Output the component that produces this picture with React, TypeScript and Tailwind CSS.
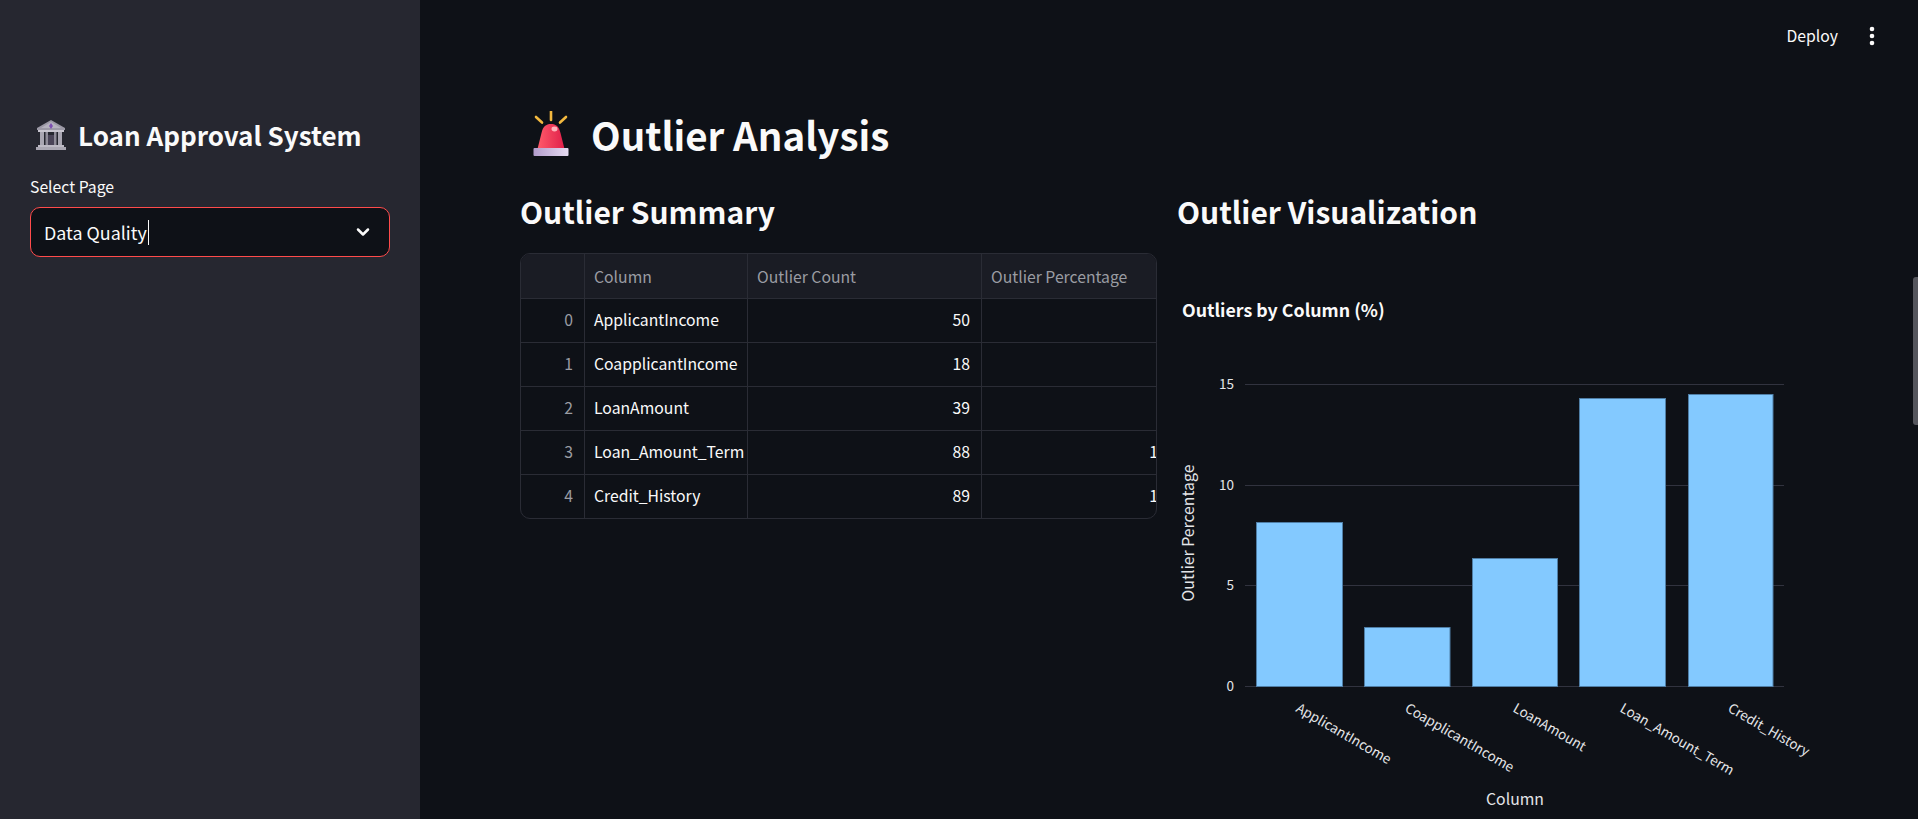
import { ChevronDown } from "lucide-react";

const rows = [
  ["0", "ApplicantIncome", "50", "8.1433"],
  ["1", "CoapplicantIncome", "18", "2.9316"],
  ["2", "LoanAmount", "39", "6.3518"],
  ["3", "Loan_Amount_Term", "88", "14.3322"],
  ["4", "Credit_History", "89", "14.4951"],
];

const bars = [
  { x: 86, w: 87, top: 521, label: "ApplicantIncome", lx: 125 },
  { x: 194, w: 86.5, top: 626, label: "CoapplicantIncome", lx: 234 },
  { x: 302, w: 86, top: 557, label: "LoanAmount", lx: 342 },
  { x: 409, w: 87, top: 397, label: "Loan_Amount_Term", lx: 449 },
  { x: 518, w: 85.5, top: 393, label: "Credit_History", lx: 557 },
];

function BankIcon() {
  return (
    <svg width="32" height="32" viewBox="0 0 32 32" aria-hidden="true">
      <path d="M16 1 L30 9 L30 11 L2 11 L2 9 Z" fill="#9c99a6" />
      <path d="M16 3 L26 9 L6 9 Z" fill="#b5b2be" />
      <path d="M16 4 l2 3 l-2 3 l-2 -3 Z" fill="#7d4fb0" />
      <rect x="3" y="11" width="26" height="2" fill="#c8c5cf" />
      <rect x="5" y="13" width="4" height="13" fill="#a9a6b2" />
      <rect x="10.5" y="13" width="2.5" height="13" fill="#8f8c99" />
      <rect x="19" y="13" width="2.5" height="13" fill="#8f8c99" />
      <rect x="23" y="13" width="4" height="13" fill="#a9a6b2" />
      <rect x="13" y="16" width="6" height="10" fill="#4a4458" />
      <rect x="3" y="26" width="26" height="2" fill="#bdbac5" />
      <rect x="1" y="28" width="30" height="3" fill="#aaa7b3" />
    </svg>
  );
}

function AlarmIcon() {
  return (
    <svg width="38" height="46" viewBox="0 0 38 46" aria-hidden="true">
      <defs>
        <linearGradient id="dome" x1="0" y1="0" x2="1" y2="0">
          <stop offset="0" stopColor="#ff5a6a" />
          <stop offset="1" stopColor="#e0204a" />
        </linearGradient>
        <linearGradient id="base" x1="0" y1="0" x2="1" y2="0">
          <stop offset="0" stopColor="#b29ccb" />
          <stop offset="1" stopColor="#e6dcf2" />
        </linearGradient>
      </defs>
      <path d="M18 0.5 V9" stroke="#f3b93f" strokeWidth="2.6" strokeLinecap="round" />
      <path d="M3 6 L9 11.5" stroke="#f3b93f" strokeWidth="2.6" strokeLinecap="round" />
      <path d="M33 6 L27 11.5" stroke="#f3b93f" strokeWidth="2.6" strokeLinecap="round" />
      <path d="M4.5 38 L8.5 22 C10 15.5 13 13 18 13 C23 13 26 15.5 27.5 22 L31.5 38 Z" fill="url(#dome)" />
      <ellipse cx="21.5" cy="18" rx="3" ry="2.4" fill="#ffb3bc" />
      <rect x="0.5" y="37" width="35" height="8" rx="1" fill="url(#base)" />
    </svg>
  );
}

function Chart() {
  // viewBox origin corresponds to the page point (1170, 290)
  const y = (v: number) => v - 290;
  return (
    <svg width="660" height="529" viewBox="0 0 660 529" className="block font-['Noto_Sans_CJK_SC',sans-serif]">
      <text x="12" y={y(316)} fontSize="17.8" fontWeight="700" fill="#fafafa">Outliers by Column (%)</text>
      {[
        [383, "15"],
        [484, "10"],
        [584, "5"],
        [685, "0"],
      ].map(([g, t]) => (
        <g key={t as string}>
          <line x1="75" x2="614" y1={y(g as number) + 0.5} y2={y(g as number) + 0.5} stroke="#31333f" strokeWidth="1" />
          <text x="64" y={y(g as number) + 5} textAnchor="end" fontSize="13.5" fill="#e4e5e8">{t}</text>
        </g>
      ))}
      {bars.map((b) => (
        <g key={b.label}>
          <rect x={b.x + 0.5} y={y(b.top) + 0.5} width={b.w - 1} height={685 - b.top} fill="#83c9ff" stroke="#4f7ea6" strokeWidth="1" />
          <text
            x={b.lx}
            y={y(710)}
            fontSize="13.5"
            fill="#e4e5e8"
            transform={`rotate(30 ${b.lx} ${y(710)})`}
          >
            {b.label}
          </text>
        </g>
      ))}
      <text x="345" y={y(804)} textAnchor="middle" fontSize="15.8" fill="#e4e5e8">Column</text>
      <text
        x="24"
        y={y(532)}
        textAnchor="middle"
        fontSize="15.8"
        fill="#e4e5e8"
        transform={`rotate(-90 24 ${y(532)})`}
      >
        Outlier Percentage
      </text>
    </svg>
  );
}

export default function App() {
  return (
    <div className="flex h-[819px] w-full overflow-hidden bg-[#0e1117] font-['Noto_Sans_CJK_SC',sans-serif] text-[#fafafa]">
      <aside className="w-[420px] shrink-0 bg-[#262730] px-[30px] pt-[119px]">
        <div className="ml-[5px] flex h-[32px] items-center gap-[11px]">
          <BankIcon />
          <h2 className="text-[26px] leading-[32px] font-semibold whitespace-nowrap">Loan Approval System</h2>
        </div>
        <div className="mt-[23px] text-[15.75px] leading-[26px]">Select Page</div>
        <div className="mt-[7px] flex h-[50px] items-center justify-between rounded-[10px] border border-[#ff4b4b] bg-[#0e1117] pr-[16px] pl-[13px]">
          <div className="flex items-center text-[17.9px] leading-[26px]">
            <span>Data Quality</span>
            <span className="ml-[1px] h-[25px] w-px bg-[#fafafa]" />
          </div>
          <ChevronDown size={20} strokeWidth={3} color="#fafafa" />
        </div>
      </aside>

      <main className="relative min-w-0 flex-1">
        <header className="flex h-[72px] items-center justify-end pr-[36px]">
          <span className="text-[15.75px] leading-[26px]">Deploy</span>
          <svg className="ml-[24px]" width="20" height="24" viewBox="0 0 20 24" fill="#fafafa" aria-hidden="true">
            <circle cx="10" cy="5" r="2.3" />
            <circle cx="10" cy="12" r="2.3" />
            <circle cx="10" cy="19" r="2.3" />
          </svg>
        </header>

        <div className="pl-[100px]">
          <div className="ml-[13px] mt-[39px] flex h-[46px] items-center gap-[20px]">
            <AlarmIcon />
            <h1 className="text-[38.5px] leading-[46px] font-semibold whitespace-nowrap">Outlier Analysis</h1>
          </div>

          <div className="mt-[29px] flex items-start">
            <section className="w-[636px] shrink-0">
              <h2 className="h-[50px] text-[30px] leading-[50px] font-semibold whitespace-nowrap">Outlier Summary</h2>
              <div className="mt-[17px] w-[637px] overflow-hidden rounded-[10px] border border-[#2a2c35]">
                <div className="flex h-[45px] w-[860px] border-b border-[#2a2c35] bg-[#1a1c24] text-[15.75px] leading-[45px] text-[#9a9ca3]">
                  <div className="w-[64px] shrink-0 border-r border-[#2a2c35]" />
                  <div className="w-[163px] shrink-0 border-r border-[#2a2c35] pl-[9px]">Column</div>
                  <div className="w-[234px] shrink-0 border-r border-[#2a2c35] pl-[9px]">Outlier Count</div>
                  <div className="pl-[9px]">Outlier Percentage</div>
                </div>
                {rows.map((r, i) => (
                  <div
                    key={r[0]}
                    className={`flex w-[860px] text-[15.75px] leading-[42px] ${i < 4 ? "h-[44px] border-b border-[#2a2c35]" : "h-[43px]"}`}
                  >
                    <div className="w-[64px] shrink-0 border-r border-[#2a2c35] pr-[11px] text-right text-[#9a9ca3]">{r[0]}</div>
                    <div className="w-[163px] shrink-0 border-r border-[#2a2c35] pl-[9px] whitespace-nowrap">{r[1]}</div>
                    <div className="w-[234px] shrink-0 border-r border-[#2a2c35] pr-[11px] text-right">{r[2]}</div>
                    <div className="w-[235px] shrink-0 pr-[11px] text-right">{r[3]}</div>
                  </div>
                ))}
              </div>
            </section>
            <section className="ml-[21px] min-w-0 flex-1">
              <h2 className="h-[50px] text-[30px] leading-[50px] font-semibold whitespace-nowrap">Outlier Visualization</h2>
              <div className="-ml-[7px] mt-[55px]">
                <Chart />
              </div>
            </section>
          </div>
        </div>

        <div className="absolute top-[277px] right-0 h-[148px] w-[5px] rounded-l-[3px] bg-[#55565d]" />
      </main>
    </div>
  );
}
